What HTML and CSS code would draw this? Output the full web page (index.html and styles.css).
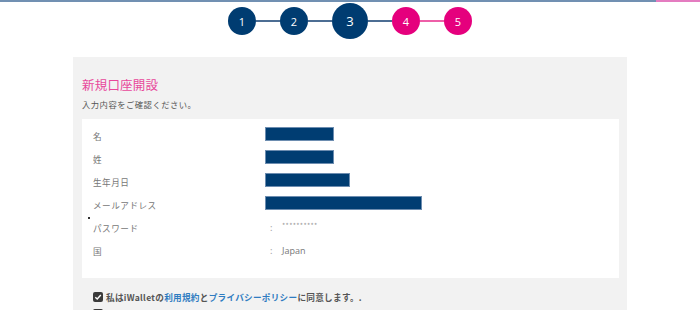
FILE: index.html
```html
<!DOCTYPE html>
<html lang="ja">
<head>
<meta charset="utf-8">
<link rel="stylesheet" href="styles.css">
</head>
<body>
<div class="topbar"><div class="done"></div><div class="rest"></div></div>
<div class="steps">
  <div class="step navy">1</div><div class="link navy-line"></div>
  <div class="step navy">2</div><div class="link navy-line"></div>
  <div class="step navy big">3</div><div class="link navy-line"></div>
  <div class="step pink">4</div><div class="link pink-line"></div>
  <div class="step pink">5</div>
</div>
<div class="panel">
  <h1 class="title">新規口座開設</h1>
  <p class="sub">入力内容をご確認ください。</p>
  <div class="card">
    <div class="row"><span class="label">名</span><span class="value"><span class="mask" style="width:69px"></span></span></div>
    <div class="row"><span class="label">姓</span><span class="value"><span class="mask" style="width:69px"></span></span></div>
    <div class="row"><span class="label">生年月日</span><span class="value"><span class="mask" style="width:85px"></span></span></div>
    <div class="row"><span class="label">メールアドレス</span><span class="value"><span class="mask" style="width:157px"></span></span></div>
    <div class="row"><span class="label">パスワード</span><span class="value"><span class="colon">:</span><span class="pw">**********</span></span></div>
    <div class="row"><span class="label">国</span><span class="value"><span class="colon">:</span><span class="txt">Japan</span></span></div>
    <span class="dot"></span>
  </div>
  <div class="agree">
    <span class="check"><svg width="10" height="10" viewBox="0 0 10 10"><rect width="10" height="10" rx="2" fill="#3a3a3a"/><path d="M2.3 5.2 L4.2 7 L7.8 3" stroke="#fff" stroke-width="1.4" fill="none"/></svg></span>
    <span>私はiWalletの<a class="lnk">利用規約</a>と<a class="lnk">プライバシーポリシー</a>に同意します。.</span>
  </div>
  <div class="agree">
    <span class="check"><svg width="10" height="10" viewBox="0 0 10 10"><rect width="10" height="10" rx="2" fill="#3a3a3a"/></svg></span>
  </div>
</div>
</body>
</html>
```
FILE: styles.css
```css
* { box-sizing: border-box; }
html, body { margin: 0; padding: 0; background: #fff; overflow: hidden; }
body { font-family: "Noto Sans CJK JP", "Noto Sans", sans-serif; width: 700px; height: 310px; }

.topbar { display: flex; height: 2px; }
.topbar .done { width: 656px; background: #7190b2; }
.topbar .rest { flex: 1; background: #e47cc0; }

.steps { display: flex; justify-content: center; align-items: center; height: 36px; margin-top: 1px; }
.step { width: 28px; height: 28px; border-radius: 50%; color: #fff; display: flex; align-items: center; justify-content: center; font-family: "Open Sans", sans-serif; font-size: 11px; }
.step.big { width: 36px; height: 36px; font-size: 13px; }
.navy { background: #003c71; }
.pink { background: #e5007d; }
.link { width: 24px; height: 2px; }
.navy-line { background: #4c6d93; }
.pink-line { background: #ee5fa8; }

.panel { width: 554px; height: 253px; overflow: hidden; margin: 18px auto 0; background: #f2f2f2; padding: 19px 8px 0 9px; }
.title { margin: 0; font-size: 12.5px; line-height: 18px; font-weight: 400; color: #e8479b; letter-spacing: 0.2px; }
.sub { margin: 3px 0 8px; font-size: 8.3px; line-height: 14px; color: #555; letter-spacing: 0.5px; }

.card { position: relative; background: #fff; padding: 5px 8px 16px 11px; }
.row { display: grid; grid-template-columns: 172px 1fr; align-items: center; height: 23px; }
.label { font-size: 8.6px; color: #777; letter-spacing: 0.5px; }
.value { display: flex; align-items: center; font-size: 9px; color: #777; }
.mask { display: block; height: 14px; background: #003d72; border: 1px solid #6d8db0; margin-top: -3px; }
.colon { width: 17px; padding-left: 5px; color: #aaa; }
.pw { font-size: 7px; color: #999; letter-spacing: 0.3px; margin-top: -6px; }
.txt { font-family: "Open Sans", sans-serif; color: #777; }
.dot { position: absolute; left: 6px; top: 98px; width: 2px; height: 2px; background: #333; }

.agree { display: flex; align-items: center; height: 14px; margin: 12px 0 0 11px; font-size: 8.6px; font-weight: 700; color: #555; letter-spacing: 0.3px; }
.agree + .agree { margin-top: 3px; }
.check { display: flex; margin-right: 3px; }
.lnk { color: #2f7cc1; }
```
